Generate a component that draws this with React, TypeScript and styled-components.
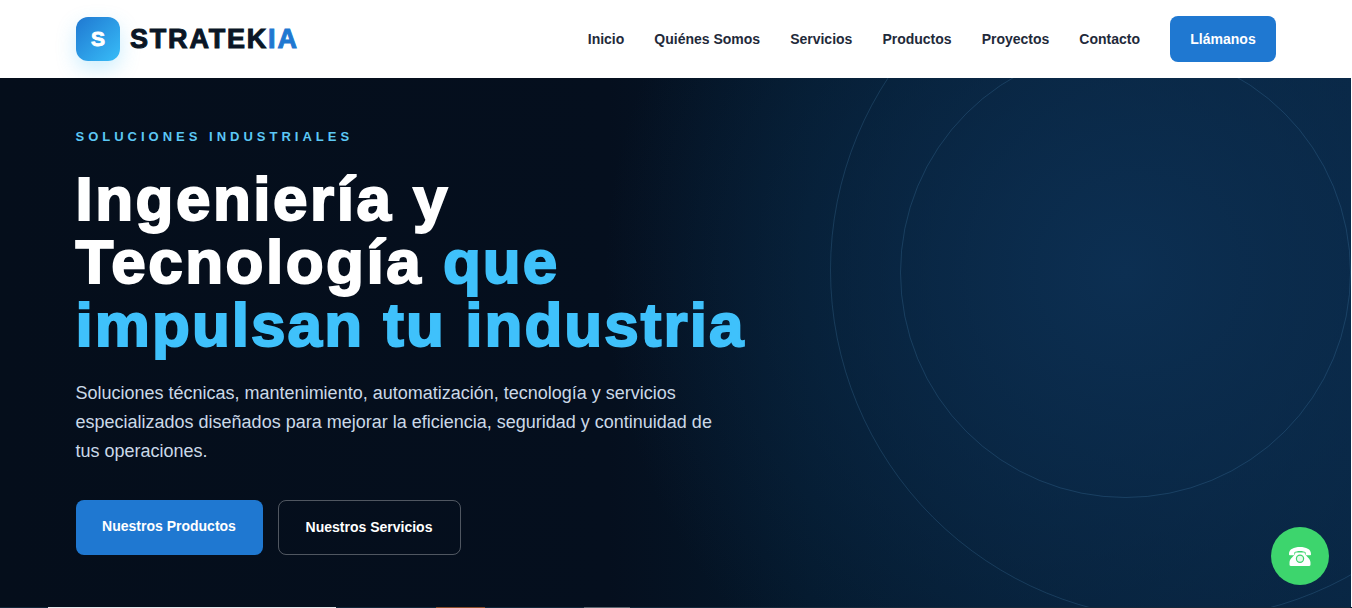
import React from "react";
import styled, { createGlobalStyle } from "styled-components";

const Global = createGlobalStyle`
  html, body { margin: 0; padding: 0; background: #fff; overflow: hidden; }
  body { font-family: "Liberation Sans", Arial, sans-serif; }
  * { box-sizing: border-box; }
`;

const Page = styled.div`
  position: relative;
  width: 100%;
  height: 608px;
  overflow: hidden;
`;

const Header = styled.header`
  height: 78px;
  background: #fff;
`;

const HeaderInner = styled.div`
  width: 1200px;
  height: 100%;
  margin: 0 auto;
  display: flex;
  align-items: center;
  justify-content: space-between;
`;

const Brand = styled.div`
  display: flex;
  align-items: center;
  gap: 10px;
`;

const LogoMark = styled.div`
  width: 44px;
  height: 44px;
  border-radius: 12px;
  background: linear-gradient(135deg, #1f78d1, #38bdf8);
  box-shadow: 0 8px 20px rgba(56, 189, 248, 0.25);
  color: #fff;
  font-weight: 700;
  font-size: 21px;
  -webkit-text-stroke: 0.9px #fff;
  display: flex;
  align-items: center;
  justify-content: center;
`;

const BrandName = styled.div`
  padding-top: 1px;
  font-size: 27px;
  font-weight: 700;
  letter-spacing: 1.8px;
  color: #0a1626;
  -webkit-text-stroke: 1px currentColor;
  line-height: 1;
`;

const BrandAccent = styled.span`
  color: #1f78d1;
`;

const Nav = styled.nav`
  display: flex;
  align-items: center;
  gap: 30px;
`;

const NavLink = styled.a`
  font-size: 14px;
  font-weight: 700;
  color: #1f2a3a;
`;

const CallButton = styled.a`
  width: 106px;
  height: 46px;
  border-radius: 8px;
  background: #1f78d1;
  color: #fff;
  font-size: 14px;
  font-weight: 700;
  display: flex;
  align-items: center;
  justify-content: center;
`;

const Hero = styled.section`
  position: relative;
  height: 529px;
  margin-right: 1px;
  overflow: hidden;
  background:
    radial-gradient(circle at 1125px 194px, #0c2f52 0, rgba(12, 47, 82, 0) 520px),
    linear-gradient(90deg, #050e1b 0, #050f1e 45%, #04182b 60%, #082440 100%);
`;

const Ring = styled.div<{ $size: number; $top: number; $right: number }>`
  position: absolute;
  width: ${(p) => p.$size}px;
  height: ${(p) => p.$size}px;
  top: ${(p) => p.$top}px;
  right: ${(p) => p.$right}px;
  border-radius: 50%;
  border: 1px solid rgba(90, 160, 210, 0.2);
`;

const HeroContent = styled.div`
  position: relative;
  width: 1200px;
  margin: 0 auto;
  padding-top: 52px;
`;

const Eyebrow = styled.div`
  font-size: 13px;
  line-height: 14px;
  font-weight: 700;
  letter-spacing: 4px;
  color: #5cc8f5;
`;

const Title = styled.h1`
  margin: 23px 0 0;
  font-size: 62px;
  line-height: 63px;
  font-weight: 700;
  letter-spacing: 2.5px;
  color: #fff;
  -webkit-text-stroke: 2px currentColor;
`;

const TitleAccent = styled.span`
  color: #3fc1fb;
  letter-spacing: 2.05px;
`;

const Lead = styled.p`
  margin: 23px 0 0;
  width: 650px;
  font-size: 18px;
  line-height: 29px;
  color: #cbd9e8;
`;

const Actions = styled.div`
  display: flex;
  gap: 15px;
  margin-top: 34px;
`;

const PrimaryAction = styled.a`
  width: 187px;
  height: 55px;
  padding-bottom: 3px;
  border-radius: 8px;
  background: #1f78d1;
  color: #fff;
  font-size: 14px;
  font-weight: 700;
  display: flex;
  align-items: center;
  justify-content: center;
`;

const SecondaryAction = styled.a`
  width: 183px;
  height: 55px;
  padding-bottom: 1px;
  border-radius: 8px;
  border: 1px solid rgba(255, 255, 255, 0.3);
  color: #fff;
  font-size: 14px;
  font-weight: 700;
  display: flex;
  align-items: center;
  justify-content: center;
`;

const NextStrip = styled.div`
  height: 1px;
  display: flex;
  background: #13283a;
`;

const StripPiece = styled.div<{ $offset: number; $width: number; $color: string }>`
  margin-left: ${(p) => p.$offset}px;
  width: ${(p) => p.$width}px;
  background: ${(p) => p.$color};
`;

const FloatingCall = styled.a`
  position: absolute;
  right: 23px;
  bottom: 23px;
  width: 58px;
  height: 58px;
  border-radius: 50%;
  background: #3dd56d;
  display: flex;
  align-items: center;
  justify-content: center;
`;

const PhoneIcon = () => (
  <svg width="24" height="21" viewBox="0 0 24 21" fill="#fff" aria-hidden="true">
    <path d="M1 8C1 3 6 1 12 1s11 2 11 7v.5c0 .5-.4.8-.8.8h-3.700c-.5 0-.8-.3-.8-.8v-2C16.500 5.500 14.500 5 12 5s-4.500.5-5.700 1.500v2c0 .5-.3.8-.8.8H1.800c-.4 0-.8-.3-.8-.8z" />
    <path d="M7.500 6.500h9c.5 3.500 6 5.500 6 10v2.200c0 .7-.5 1.200-1.200 1.200H2.700c-.7 0-1.200-.5-1.200-1.200v-2.200c0-4.500 5.500-6.500 6-10z" />
    <circle cx="12" cy="12.800" r="4.200" fill="#3dd56d" />
    <circle cx="12" cy="12.800" r="3" fill="#e6f9ec" />
  </svg>
);

const links = ["Inicio", "Quiénes Somos", "Servicios", "Productos", "Proyectos", "Contacto"];

export default function App() {
  return (
    <Page>
      <Global />
      <Header>
        <HeaderInner>
          <Brand>
            <LogoMark>S</LogoMark>
            <BrandName>
              STRATEK<BrandAccent>IA</BrandAccent>
            </BrandName>
          </Brand>
          <Nav>
            {links.map((l) => (
              <NavLink key={l}>{l}</NavLink>
            ))}
            <CallButton>Llámanos</CallButton>
          </Nav>
        </HeaderInner>
      </Header>
      <Hero>
        <Ring $size={700} $top={-158} $right={-179} />
        <Ring $size={451} $top={-31} $right={0} />
        <HeroContent>
          <Eyebrow>SOLUCIONES INDUSTRIALES</Eyebrow>
          <Title>
            Ingeniería y
            <br />
            Tecnología <TitleAccent>que</TitleAccent>
            <br />
            <TitleAccent>impulsan tu industria</TitleAccent>
          </Title>
          <Lead>
            Soluciones técnicas, mantenimiento, automatización, tecnología y servicios
            especializados diseñados para mejorar la eficiencia, seguridad y continuidad de
            tus operaciones.
          </Lead>
          <Actions>
            <PrimaryAction>Nuestros Productos</PrimaryAction>
            <SecondaryAction>Nuestros Servicios</SecondaryAction>
          </Actions>
        </HeroContent>
      </Hero>
      <NextStrip>
        <StripPiece $offset={48} $width={288} $color="#e4e7ea" />
        <StripPiece $offset={100} $width={49} $color="#8a4f2c" />
        <StripPiece $offset={99} $width={46} $color="#5a6670" />
      </NextStrip>
      <FloatingCall>
        <PhoneIcon />
      </FloatingCall>
    </Page>
  );
}
